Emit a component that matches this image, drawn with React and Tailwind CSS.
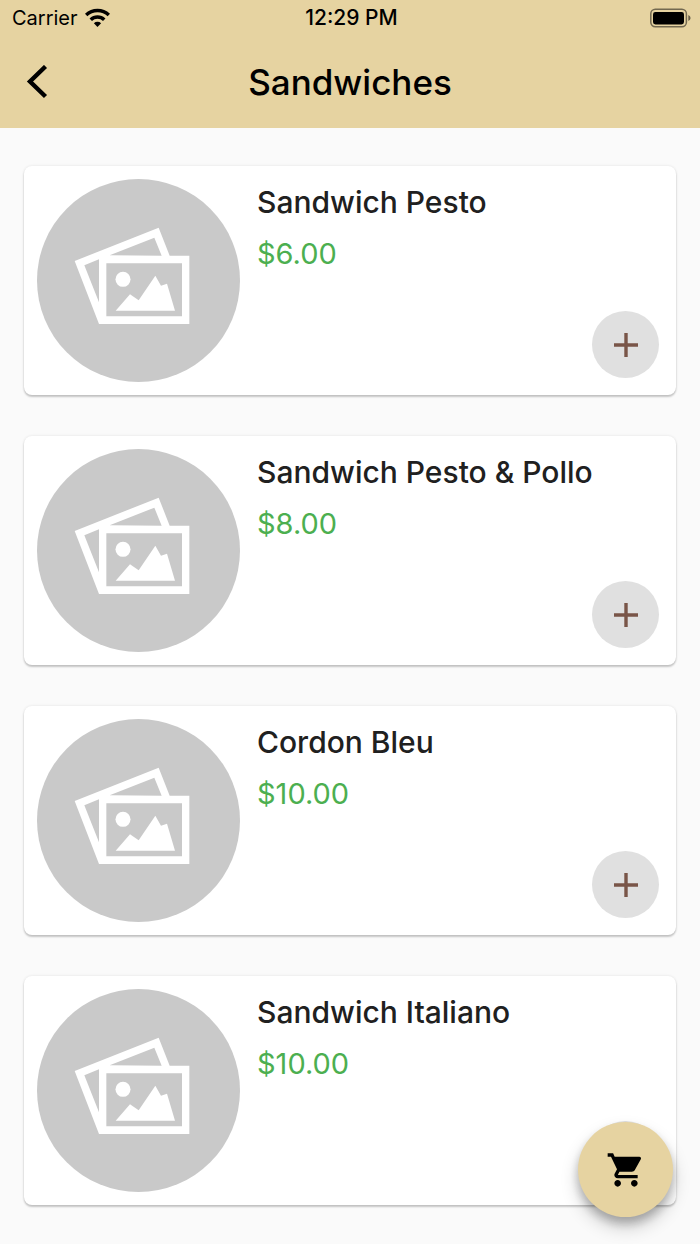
import React from "react";

const items = [
  { name: "Sandwich Pesto", price: "$6.00" },
  { name: "Sandwich Pesto & Pollo", price: "$8.00" },
  { name: "Cordon Bleu", price: "$10.00" },
  { name: "Sandwich Italiano", price: "$10.00" },
];

function WifiIcon() {
  return (
    <svg viewBox="0 0 76 57" className="h-[19px] w-[25px]" aria-hidden="true">
      <g fill="none" stroke="#000" strokeWidth="10.5">
        <path d="M3.5 21 A50 50 0 0 1 72.5 21" />
        <path d="M17.5 35.5 A29 29 0 0 1 58.5 35.5" />
      </g>
      <path d="M38 57 L27 46 A16 16 0 0 1 49 46 Z" />
    </svg>
  );
}

function BatteryIcon() {
  return (
    <svg viewBox="0 0 41 20" className="h-5 w-[41px]" aria-hidden="true">
      <rect x="0.8" y="1.2" width="35.6" height="17.6" rx="4.5" fill="none" stroke="#000" strokeOpacity=".5" strokeWidth="1.5" />
      <rect x="3" y="4" width="31" height="12.4" rx="2.4" />
      <path d="M38.3 7 Q40.6 8 40.6 10 Q40.6 12 38.3 13 Z" fillOpacity=".55" />
    </svg>
  );
}

function Placeholder() {
  return (
    <svg viewBox="66 72 609 609" className="size-[203px] shrink-0" role="img" aria-label="No photo">
      <circle cx="370.5" cy="376.5" r="304.5" fill="#c9c9c9" />
      <path
        fill="#fff"
        fillRule="evenodd"
        d="M179 318 L431 218 L464 302 H523 V507 H252 Z M208 331 L252 313 V442 Z M284 301 L418 248 L440 302 Z M274 325 V484 H501 V325 Z"
      />
      <circle cx="324" cy="373" r="22.5" fill="#fff" />
      <path fill="#fff" d="M302 467 L345 418 L371 436 L421 362 L438 392 L456 386 L480 467 Z" />
    </svg>
  );
}

function ItemCard({ name, price }) {
  return (
    <li className="flex items-stretch rounded-lg bg-white py-[13px] pr-[17px] pl-[13px] shadow-[0_2px_2px_rgba(0,0,0,0.2),0_0_3px_rgba(0,0,0,0.1)]">
      <Placeholder />
      <div className="flex min-w-0 flex-1 flex-col pt-1 pb-1 pl-[17px]">
        <h2 className="text-[30px] leading-[38px] font-medium whitespace-nowrap text-[#202020]">{name}</h2>
        <p className="mt-3.5 text-[29px] leading-[38px] text-[#4caf50]">{price}</p>
        <button
          type="button"
          aria-label={"Add " + name}
          className="mt-auto flex size-[67px] items-center justify-center self-end rounded-full bg-[#e0e0e0]"
        >
          <svg viewBox="0 0 24 24" className="size-6" aria-hidden="true">
            <path d="M12 0V24M0 12H24" stroke="#795548" strokeWidth="3.4" />
          </svg>
        </button>
      </div>
    </li>
  );
}

export default function App() {
  return (
    <div className="min-h-screen bg-[#fafafa] font-['Inter',sans-serif] text-black">
      <header className="bg-[#e6d3a1]">
        <div className="grid h-[35px] grid-cols-3 items-center pr-[9px] pl-3">
          <div className="flex items-center gap-[7px] text-xl">
            <span>Carrier</span>
            <WifiIcon />
          </div>
          <span className="text-center text-[21px] leading-7 font-medium">12:29 PM</span>
          <div className="flex justify-end">
            <BatteryIcon />
          </div>
        </div>
        <div className="grid h-[93px] grid-cols-[72px_1fr_72px] items-center">
          <button type="button" aria-label="Back" className="flex h-12 items-center pl-[26px]">
            <svg viewBox="0 0 22 34" className="h-[34px] w-[22px]" aria-hidden="true">
              <path d="M19.5 1.5 L4 16.5 L19.5 31.5" fill="none" stroke="#000" strokeWidth="4.4" />
            </svg>
          </button>
          <h1 className="text-center text-[35px] leading-[48px] font-medium">Sandwiches</h1>
        </div>
      </header>
      <main className="px-6 pt-[38px] pb-[38px]">
        <ul className="flex flex-col gap-[41px]">
          {items.map((item) => (
            <ItemCard key={item.name} name={item.name} price={item.price} />
          ))}
        </ul>
      </main>
      <button
        type="button"
        aria-label="Open cart"
        className="fixed right-[27px] bottom-[27px] flex size-[95px] items-center justify-center rounded-full bg-[#e6d3a1] shadow-[0_10px_18px_rgba(0,0,0,0.2),0_6px_10px_rgba(0,0,0,0.22)]"
      >
        <svg viewBox="0 0 24 24" className="size-10" aria-hidden="true">
          <path d="M7 18c-1.1 0-1.99.9-1.99 2S5.9 22 7 22s2-.9 2-2-.9-2-2-2zM1 2v2h2l3.6 7.59-1.35 2.45c-.16.28-.25.61-.25.96 0 1.1.9 2 2 2h12v-2H7.42c-.14 0-.25-.11-.25-.25l.03-.12.9-1.63h7.45c.75 0 1.41-.41 1.75-1.03l3.58-6.49A1.003 1.003 0 0 0 20 4H5.21l-.94-2H1zm16 16c-1.1 0-1.99.9-1.99 2s.89 2 1.99 2 2-.9 2-2-.9-2-2-2z" />
        </svg>
      </button>
    </div>
  );
}
